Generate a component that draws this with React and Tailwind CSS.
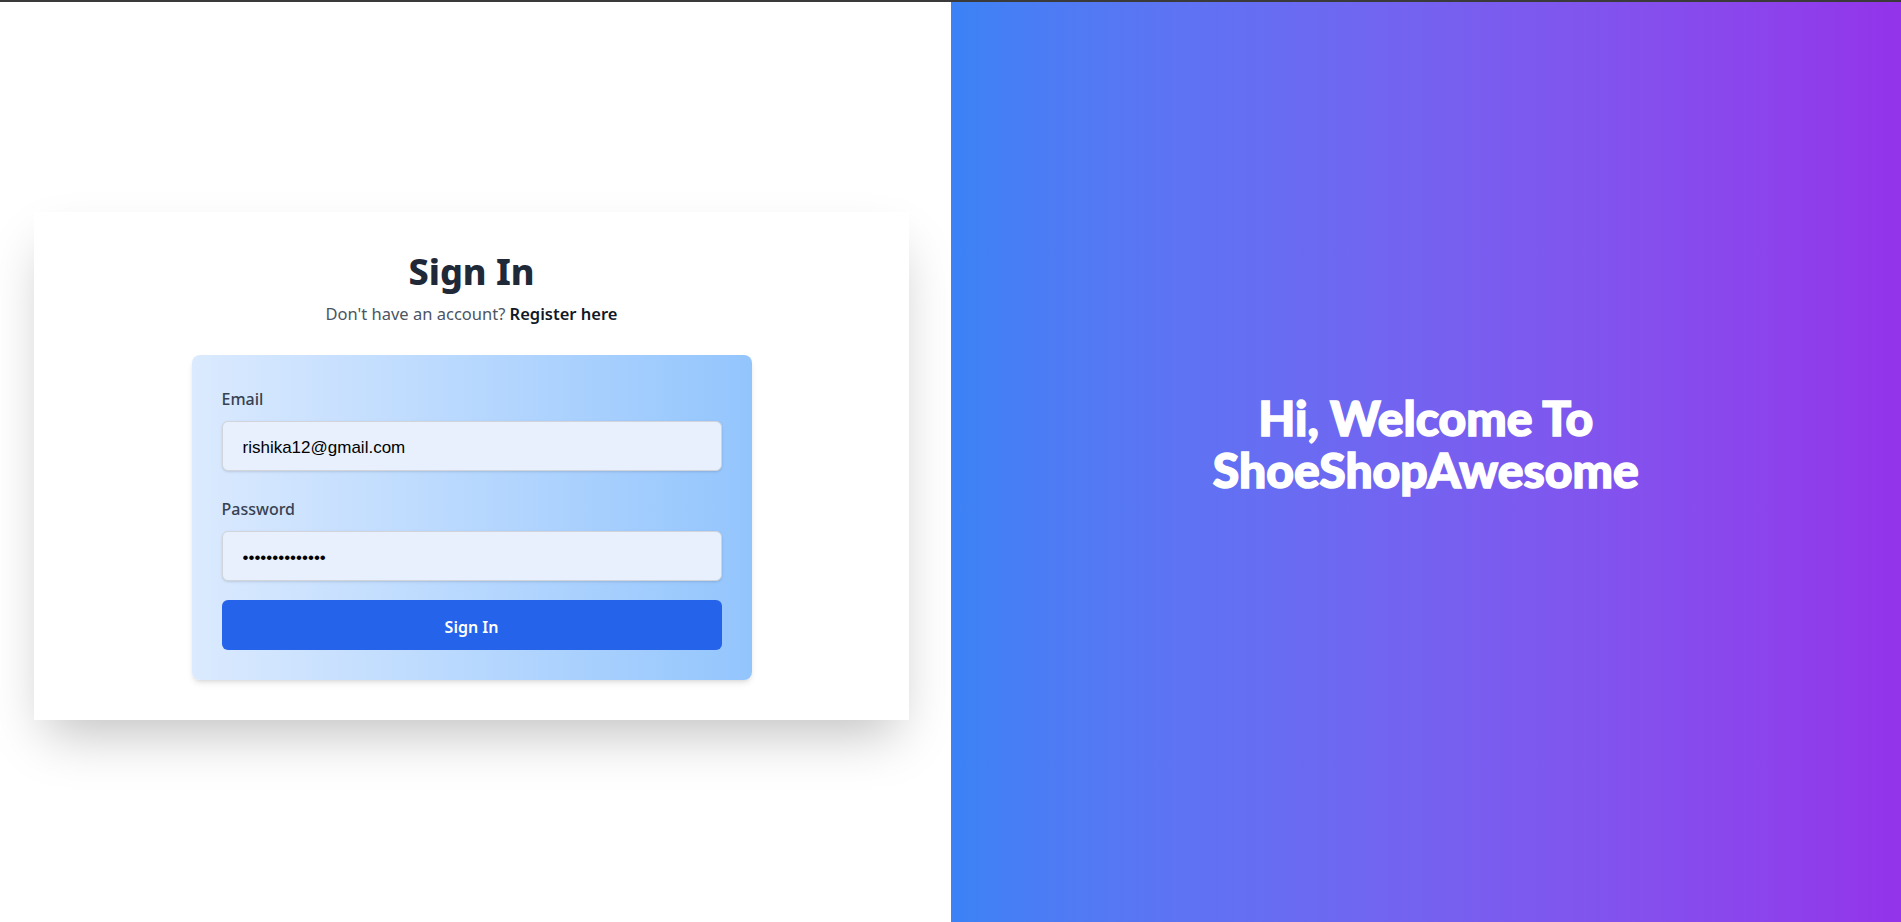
export default function App() {
  return (
    <div className="flex h-[922px] flex-col bg-white" style={{ fontFamily: '"Noto Sans", "Open Sans", sans-serif' }}>
      <div className="h-[2px] bg-[#3a3a3a]" />
      <div className="flex flex-1">
        {/* Left: form */}
        <div className="flex w-1/2 items-center pl-[34px] pt-2">
          <div className="w-[875px] bg-white p-10 shadow-2xl">
            <h1 className="text-center text-4xl font-extrabold text-[#1f2937]">Sign In</h1>
            <p className="mt-2 text-center text-[16.5px] leading-7 text-[#4b5563]">
              Don't have an account? <a href="#" className="font-semibold text-[#111827]">Register here</a>
            </p>

            <form className="mx-auto mt-[27px] w-[560px] rounded-lg bg-linear-to-r from-[#dbeafe] to-[#93c5fd] px-[30px] pt-8 pb-[30px] shadow-md">
              <label htmlFor="email" className="mb-[10px] block text-base font-medium text-[#374151]">Email</label>
              <input
                id="email"
                type="email"
                defaultValue="rishika12@gmail.com"
                className="block h-[50px] w-full rounded-md border border-[#d1d5db] bg-[#e8f0fe] px-5 pt-[3px] text-[17px] text-black shadow-sm focus:outline-none"
                style={{ fontFamily: '"Liberation Sans", Arial, sans-serif' }}
              />

              <label htmlFor="password" className="mt-[26px] mb-[10px] block text-base font-medium text-[#374151]">Password</label>
              <input
                id="password"
                type="password"
                defaultValue="rishika1234567"
                className="block h-[50px] w-full rounded-md border border-[#d1d5db] bg-[#e8f0fe] px-5 pt-[3px] text-[17px] text-black shadow-sm focus:outline-none"
                style={{ fontFamily: '"Liberation Sans", Arial, sans-serif' }}
              />

              <button
                type="button"
                className="mt-[19px] h-[50px] w-full rounded-md bg-[#2563eb] pt-[3px] text-base font-semibold text-white"
              >
                Sign In
              </button>
            </form>
          </div>
        </div>

        {/* Right: welcome */}
        <div className="flex w-1/2 items-center justify-center bg-linear-to-r from-[#3b82f6] to-[#9333ea] pb-9">
          <h2
            className="text-center text-5xl leading-[52px] font-black text-white [-webkit-text-stroke:1.5px_white]"
            style={{ fontFamily: 'Lato, "Noto Sans", sans-serif' }}
          >
            Hi, Welcome To
            <br />
            ShoeShopAwesome
          </h2>
        </div>
      </div>
    </div>
  );
}
